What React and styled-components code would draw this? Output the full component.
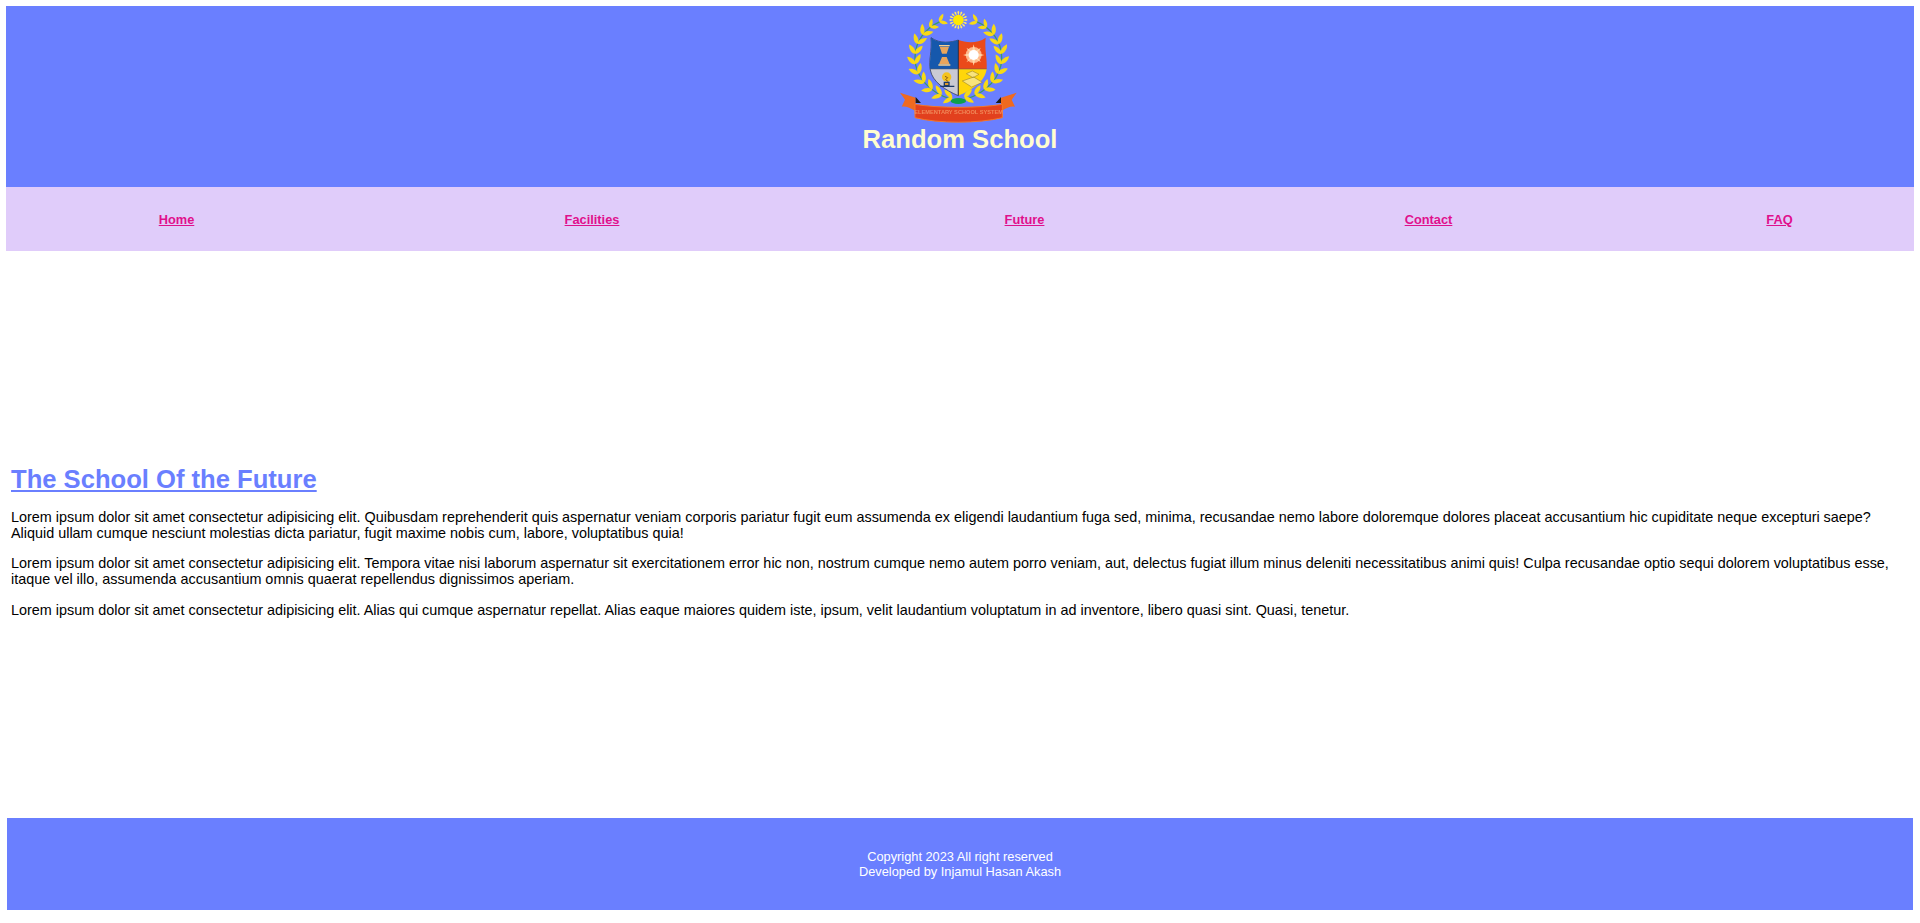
import React from "react";
import styled, { createGlobalStyle } from "styled-components";

const Global = createGlobalStyle`
  html, body { margin: 0; padding: 0; background: #fff; }
  body { font-family: "Liberation Sans", Arial, sans-serif; color: #000; }
`;
const Page = styled.div`
  padding: 6px 6px 13px;
  display: flex;
  flex-direction: column;
`;
const Header = styled.header`
  background: #6a7fff;
  height: 181px;
  display: flex;
  flex-direction: column;
  align-items: center;
`;
const Logo = styled.svg`
  width: 130px;
  height: 120px;
  display: block;
  filter: blur(0.35px);
`;
const Title = styled.h1`
  margin: -2px 0 0;
  font-size: 25.6px;
  line-height: 30px;
  font-weight: 700;
  color: #fffdd0;
`;
const Nav = styled.nav`
  background: #e0ccfa;
  height: 64px;
  display: grid;
  grid-template-columns: 341px 490px 375px 433px 269px;
  align-items: center;
  justify-items: center;
`;
const NavLink = styled.a`
  color: #e0108c;
  font-size: 12.8px;
  font-weight: 700;
  text-decoration: underline;
`;
const Main = styled.main`
  padding: 213px 5px 0;
  height: 567px;
  box-sizing: border-box;
`;
const Heading = styled.h2`
  margin: 0 0 15px;
  font-size: 25.6px;
  line-height: 30px;
  font-weight: 700;
  color: #6a7fff;
  text-decoration: underline;
`;
const Para = styled.p`
  margin: 0 0 14.4px;
  font-size: 14.4px;
  line-height: 16px;
`;
const Footer = styled.footer`
  background: #6a7fff;
  margin: 0 1px;
  height: 92px;
  display: flex;
  flex-direction: column;
  align-items: center;
  justify-content: center;
  color: #fff;
  font-size: 12.8px;
  line-height: 15px;
  box-sizing: border-box;
`;

const leafPath = "M0 0C4 -9 20 -10 33 -1C22 8 6 7 0 0Z";
function leaves() {
  const out = [];
  const cx = 190, cy = 158, rx = 130, ry = 120;
  for (let side = -1; side <= 1; side += 2) {
    for (let i = 0; i < 11; i++) {
      const t = (-64 + i * 14.6) * Math.PI / 180;
      const x = cx + side * rx * Math.cos(t);
      const y = cy + ry * Math.sin(t);
      const base = Math.atan2(-ry * Math.cos(t), side * rx * Math.sin(t));
      const deg = base * 180 / Math.PI;
      const s = i < 2 ? 0.8 : 1;
      out.push(<path key={`o${side}${i}`} d={leafPath} fill="#f7d916" transform={`translate(${x} ${y}) rotate(${deg + side * 38}) scale(${s})`} />);
      out.push(<path key={`n${side}${i}`} d={leafPath} fill="#f7d916" transform={`translate(${x} ${y}) rotate(${deg - side * 38}) scale(${s})`} />);
    }
  }
  return out;
}
const rays = Array.from({ length: 16 }, (_, i) => i * 22.5);

const Crest = () => (
  <Logo viewBox="0 3 390 360" aria-label="Random School crest">
    <path d="M135 50C90 70 60 110 60 158C60 215 105 265 172 284M245 50C290 70 320 110 320 158C320 215 275 265 208 284" fill="none" stroke="#3c9a6a" strokeWidth="4" />
    {leaves()}
    {rays.map(r => <path key={r} d="M190 32L187 21L190 17L193 21Z" fill="#ffe96a" transform={`rotate(${r} 190 45)`} />)}
    <circle cx="190" cy="45" r="16" fill="#ffe900" />
    <path d="M190 105C170 112 135 118 108 98C112 140 100 165 106 195C112 230 150 255 190 272Z" fill="#c9cad4" stroke="#222a3c" strokeWidth="2" />
    <path d="M190 105C170 112 135 118 108 98C112 135 103 160 105 192H190Z" fill="#1658ac" />
    <path d="M190 105C210 112 245 118 272 98C268 135 277 160 275 192H190Z" fill="#ea4a1a" />
    <path d="M190 192H275C270 230 230 255 190 272Z" fill="#ffd60a" />
    <path d="M190 105V272" stroke="#23283a" strokeWidth="2.5" fill="none" />
    <path d="M105 192H275" stroke="#5a5a60" strokeWidth="1.5" fill="none" />
    <path d="M134 125H162L155 146H141ZM141 156H155L164 178H132Z" fill="#e8a55c" />
    <path d="M132 122H164M130 180H166" stroke="#f3cf92" strokeWidth="4" />
    <circle cx="236" cy="150" r="24" fill="#ffb58a" />
    <path d="M236 118L241 139L258 128L246 145L268 150L246 156L258 172L241 161L236 182L231 161L214 172L226 156L204 150L226 145L214 128L231 139Z" fill="#ffd8a8" />
    <circle cx="236" cy="150" r="15" fill="#fff" />
    <circle cx="155" cy="216" r="14" fill="#f3c31f" />
    <path d="M150 214L158 218L152 224L160 230" stroke="#8a5a14" strokeWidth="3" fill="none" />
    <path d="M148 232H162V242H148ZM136 244H178" stroke="#1b3a66" strokeWidth="4" fill="#e09c2c" />
    <path d="M202 228L236 216L262 232L230 246Z M214 206L232 198L252 208L234 218Z" fill="#f8e37c" stroke="#8f7b22" strokeWidth="1.6" />
    <ellipse cx="190" cy="288" rx="23" ry="9" fill="#0fa04b" />
    <path d="M15 263L62 278V318C45 307 30 302 20 305L30 284Z" fill="#ef6a20" />
    <path d="M365 263L318 278V318C335 307 350 302 360 305L350 284Z" fill="#ef6a20" />
    <path d="M62 276L78 294H62ZM318 276L302 294H318Z" fill="#1c1c1c" />
    <path d="M60 298C130 310 250 310 322 298V338C250 356 130 356 60 338Z" fill="#e2401e" stroke="#f4772a" strokeWidth="3" />
    <text x="191" y="328" textAnchor="middle" fontFamily="Liberation Sans, sans-serif" fontSize="17" fontWeight="700" fill="#f0895a">ELEMENTARY SCHOOL SYSTEM</text>
  </Logo>
);

export default function App() {
  return (
    <Page>
      <Global />
      <Header>
        <Crest />
        <Title>Random School</Title>
      </Header>
      <Nav>
        <NavLink href="#">Home</NavLink>
        <NavLink href="#">Facilities</NavLink>
        <NavLink href="#">Future</NavLink>
        <NavLink href="#">Contact</NavLink>
        <NavLink href="#">FAQ</NavLink>
      </Nav>
      <Main>
        <Heading>The School Of the Future</Heading>
        <Para>Lorem ipsum dolor sit amet consectetur adipisicing elit. Quibusdam reprehenderit quis aspernatur veniam corporis pariatur fugit eum assumenda ex eligendi laudantium fuga sed, minima, recusandae nemo labore doloremque dolores placeat accusantium hic cupiditate neque excepturi saepe? Aliquid ullam cumque nesciunt molestias dicta pariatur, fugit maxime nobis cum, labore, voluptatibus quia!</Para>
        <Para>Lorem ipsum dolor sit amet consectetur adipisicing elit. Tempora vitae nisi laborum aspernatur sit exercitationem error hic non, nostrum cumque nemo autem porro veniam, aut, delectus fugiat illum minus deleniti necessitatibus animi quis! Culpa recusandae optio sequi dolorem voluptatibus esse, itaque vel illo, assumenda accusantium omnis quaerat repellendus dignissimos aperiam.</Para>
        <Para>Lorem ipsum dolor sit amet consectetur adipisicing elit. Alias qui cumque aspernatur repellat. Alias eaque maiores quidem iste, ipsum, velit laudantium voluptatum in ad inventore, libero quasi sint. Quasi, tenetur.</Para>
      </Main>
      <Footer>
        <div>Copyright 2023 All right reserved</div>
        <div>Developed by Injamul Hasan Akash</div>
      </Footer>
    </Page>
  );
}
